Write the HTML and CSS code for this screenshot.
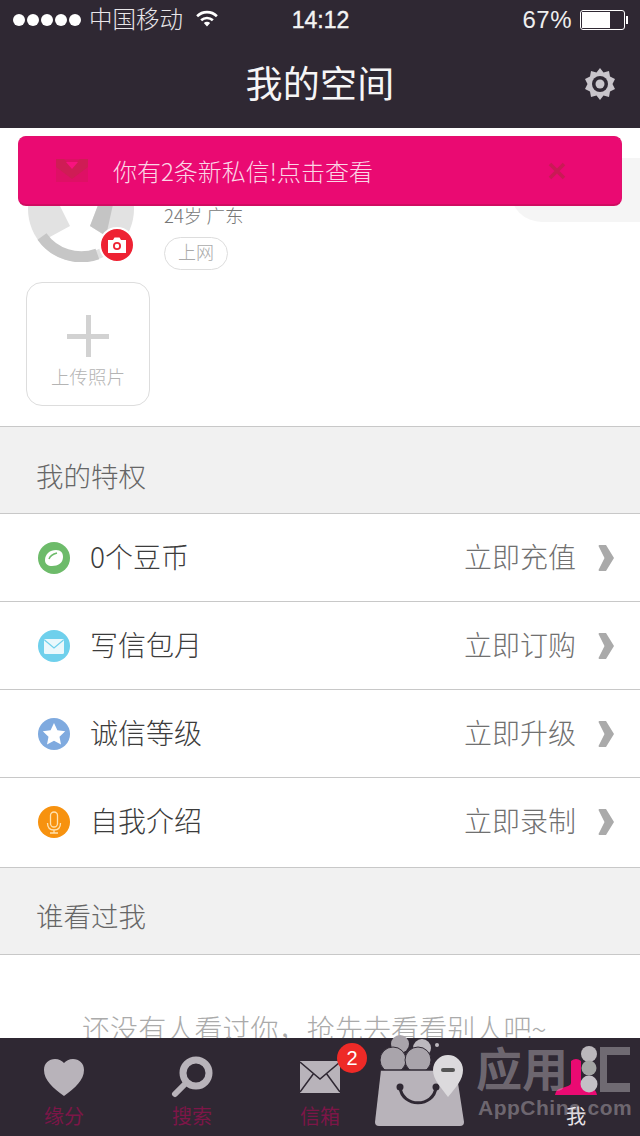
FILE: index.html
```html
<!DOCTYPE html>
<html lang="zh-CN">
<head>
  <meta charset="UTF-8">
  <meta name="viewport" content="width=device-width, initial-scale=1.0">
  <title>我的空间</title>
  <link rel="stylesheet" href="styles.css">
</head>
<body>
<div class="phone">

  <!-- Header -->
  <header class="top">
    <div class="status">
      <div class="status-left">
        <span class="dots"><i></i><i></i><i></i><i></i><i></i></span>
        <span class="carrier">中国移动</span>
        <svg class="wifi" width="24" height="18" viewBox="0 0 26 20"><path d="M1 7a17 17 0 0 1 24 0l-2 2.200a14 14 0 0 0-20 0zM5.500 11.500a11 11 0 0 1 15 0l-2 2.200a8 8 0 0 0-11 0zM9.500 15.500a5 5 0 0 1 7 0L13 19.500z" fill="#fff"/></svg>
      </div>
      <div class="clock">14:12</div>
      <div class="status-right">
        <span class="percent">67%</span>
        <span class="battery"><span class="battery-level"></span></span>
        <span class="battery-tip"></span>
      </div>
    </div>
    <div class="navbar">
      <h1>我的空间</h1>
      <svg class="gear" width="32" height="34" viewBox="0 0 32 34">
        <path d="M16 1l3.500 4.500 5.500-1.500 1 5.500 5 2.500-2.500 5 2.500 5-5 2.500-1 5.500-5.500-1.500L16 33l-3.500-4.500L7 30l-1-5.500L1 22l2.500-5L1 12l5-2.500L7 4l5.500 1.500z" fill="#c9c5cb"/>
        <circle cx="16" cy="17" r="8" fill="#2f2833"/>
        <circle cx="16" cy="17" r="4.500" fill="#c9c5cb"/>
      </svg>
    </div>
  </header>

  <main class="content">
    <!-- Profile -->
    <section class="profile">
      <div class="profile-top">
        <div class="avatar">
          <svg width="106" height="106" viewBox="0 0 106 106">
            <circle cx="53" cy="53" r="53" fill="#e2e2e2"/>
            <path d="M29 44L42 70 20 82A44 44 0 0 0 84 84L62 70 72 44z" fill="#fff"/>
            <path d="M72 44L62 70 78 80 86 44z" fill="#c4c4c4"/>
            <path d="M14 80.500A48 48 0 0 0 69.400 98" fill="none" stroke="#c6c6c6" stroke-width="11"/>
          </svg>
          <span class="camera">
            <svg width="20" height="18" viewBox="0 0 20 18">
              <path d="M1 4h5l1.500-2.500h5L14 4h5v13H1z" fill="#fff"/>
              <circle cx="10" cy="10" r="4" fill="#ee2233"/>
              <circle cx="10" cy="10" r="2.200" fill="#fff"/>
            </svg>
          </span>
        </div>
        <div class="info">
          <div class="age">24岁 广东</div>
          <div class="tag">上网</div>
        </div>
        <div class="bubble"><span>打招呼</span></div>
      </div>
      <div class="upload">
        <span class="plus"></span>
        <span class="upload-text">上传照片</span>
      </div>
    </section>

    <!-- Privileges -->
    <div class="section-title">我的特权</div>
    <div class="row">
      <svg class="row-icon" width="32" height="32" viewBox="0 0 32 32">
        <circle cx="16" cy="16" r="16" fill="#6dbb6a"/>
        <path d="M7 18c0-6 5-10 11-10 5 0 7 3 7 7 0 6-5 9-11 9-4 0-7-2-7-6z" fill="#fff"/>
        <path d="M11 17c1-3 4-5 8-6" fill="none" stroke="#6dbb6a" stroke-width="1.500"/>
      </svg>
      <span class="row-name">0个豆币</span>
      <span class="row-action">立即充值</span>
      <svg class="chevron" width="16" height="26" viewBox="0 0 16 26"><path d="M1 0h7l8 13-8 13H1q-1-1 0-2l5.500-11L1 2q-1-1 0-2z" fill="#aaa"/></svg>
    </div>
    <div class="row">
      <svg class="row-icon" width="32" height="32" viewBox="0 0 32 32">
        <circle cx="16" cy="16" r="16" fill="#6fd0ec"/>
        <rect x="6" y="9" width="20" height="15" rx="1.500" fill="#eaf8fc"/>
        <path d="M6.500 10l9.500 8 9.500-8" fill="none" stroke="#6fd0ec" stroke-width="1.200"/>
      </svg>
      <span class="row-name">写信包月</span>
      <span class="row-action">立即订购</span>
      <svg class="chevron" width="16" height="26" viewBox="0 0 16 26"><path d="M1 0h7l8 13-8 13H1q-1-1 0-2l5.500-11L1 2q-1-1 0-2z" fill="#aaa"/></svg>
    </div>
    <div class="row">
      <svg class="row-icon" width="32" height="32" viewBox="0 0 32 32">
        <circle cx="16" cy="16" r="16" fill="#7faadf"/>
        <path d="M16 5l3.400 7.300 7.800 1-5.700 5.400 1.500 7.900L16 22.700l-7 3.900 1.500-7.900-5.700-5.400 7.800-1z" fill="#fff"/>
      </svg>
      <span class="row-name">诚信等级</span>
      <span class="row-action">立即升级</span>
      <svg class="chevron" width="16" height="26" viewBox="0 0 16 26"><path d="M1 0h7l8 13-8 13H1q-1-1 0-2l5.500-11L1 2q-1-1 0-2z" fill="#aaa"/></svg>
    </div>
    <div class="row row-last">
      <svg class="row-icon" width="32" height="32" viewBox="0 0 32 32">
        <circle cx="16" cy="16" r="16" fill="#f7920f"/>
        <rect x="12.500" y="6" width="7" height="15" rx="3.500" fill="none" stroke="#ffe2b0" stroke-width="1.300"/>
        <path d="M9.500 17c0 5 3 7 6.500 7s6.500-2 6.500-7M16 24v3M12 27h8" fill="none" stroke="#ffe2b0" stroke-width="1.300"/>
      </svg>
      <span class="row-name">自我介绍</span>
      <span class="row-action">立即录制</span>
      <svg class="chevron" width="16" height="26" viewBox="0 0 16 26"><path d="M1 0h7l8 13-8 13H1q-1-1 0-2l5.500-11L1 2q-1-1 0-2z" fill="#aaa"/></svg>
    </div>

    <!-- Visitors -->
    <div class="section-title">谁看过我</div>
    <div class="empty">还没有人看过你&#xFF0C;抢先去看看别人吧~</div>
  </main>

  <!-- Tab bar -->
  <nav class="tabbar">
    <div class="tab">
      <svg width="42" height="38" viewBox="0 0 42 38"><path d="M21 38C10 30 1 22 1 12 1 5 6 1 12 1c4 0 7 2 9 4 2-2 5-4 9-4 6 0 11 4 11 11 0 10-9 18-20 26z" fill="#b8b3ba"/></svg>
      <span>缘分</span>
    </div>
    <div class="tab">
      <svg width="42" height="42" viewBox="0 0 42 42">
        <circle cx="25" cy="17" r="13" fill="none" stroke="#b8b3ba" stroke-width="7"/>
        <path d="M13 29L4 38" stroke="#b8b3ba" stroke-width="6" stroke-linecap="round"/>
      </svg>
      <span>搜索</span>
    </div>
    <div class="tab">
      <svg width="40" height="32" viewBox="0 0 40 32">
        <rect width="40" height="32" fill="#b8b3ba"/>
        <path d="M0 1l20 17L40 1M0 31l14-19M40 31L26 12" fill="none" stroke="#2f2833" stroke-width="1.500"/>
      </svg>
      <span>信箱</span>
      <b class="badge">2</b>
    </div>
    <div class="tab tab-covered">
      <svg width="42" height="38" viewBox="0 0 42 38"></svg>
      <span>附近</span>
    </div>
    <div class="tab tab-active">
      <svg width="44" height="38" viewBox="0 0 44 38"><path d="M17 3q5-4 10 0v22q0 2 3 3l9 3q3 1 4 6H1q1-5 4-6l9-3q3-1 3-3z" fill="#ea0a72"/></svg>
      <span>我</span>
    </div>
  </nav>

  <!-- Notice over the profile -->
  <div class="notice">
    <svg class="notice-mail" width="34" height="28" viewBox="0 0 34 28">
      <rect x="1" y="2" width="32" height="23" fill="#de1065"/>
      <path d="M1 2h8l8 8 8-8h8v8L17 22 1 10z" fill="#cf1c55"/>
      <path d="M11 5h12l-6 7z" fill="#f8127f"/>
    </svg>
    <span class="notice-text">你有2条新私信!点击查看</span>
    <svg class="notice-close" width="18" height="18" viewBox="0 0 18 18"><path d="M2 2l14 14M16 2L2 16" stroke="#c81a55" stroke-width="3.500"/></svg>
  </div>

  <!-- AppChina watermark -->
  <div class="watermark">
    <svg class="wm-bag" width="92" height="94" viewBox="0 0 92 94">
      <circle cx="26" cy="10" r="9" fill="#a9a4ab"/>
      <circle cx="48" cy="14" r="9" fill="#bcb8be"/>
      <circle cx="63" cy="11" r="2" fill="#bcb8be"/>
      <circle cx="19" cy="26" r="13" fill="#a9a4ab" stroke="#2f2833"/>
      <circle cx="44" cy="26" r="13" fill="#a9a4ab" stroke="#2f2833"/>
      <path d="M7 36h75l8 52q0 4-4 4H5q-4 0-4-4z" fill="#b8b3ba"/>
      <path d="M7 36h75" stroke="#2f2833" stroke-width="1.500"/>
      <path d="M26 53c2 21 34 21 36 0" fill="none" stroke="#2f2833" stroke-width="3"/>
      <circle cx="26" cy="53" r="3.500" fill="#2f2833"/>
      <circle cx="62" cy="53" r="3.500" fill="#2f2833"/>
    </svg>
    <svg class="wm-pin" width="30" height="42" viewBox="0 0 30 42"><path d="M15 42C8 32 0 25 0 15a15 15 0 0 1 30 0c0 10-7 17-15 27z" fill="#dcdadd"/><rect x="8" y="13" width="14" height="4" rx="2" fill="#555"/></svg>
    <span class="wm-title">应用</span>
    <svg class="wm-hui" width="60" height="60" viewBox="0 0 60 60">
      <path d="M22 11h30v8H29v28h23v9H22z" fill="#6f6a72"/>
      <circle cx="11" cy="18" r="8" fill="#bbb7bc"/>
      <circle cx="11" cy="32" r="7.500" fill="#a4a5a4"/>
      <circle cx="11" cy="48" r="8.500" fill="#c4c0c6"/>
    </svg>
    <span class="wm-sub">AppChina.com</span>
  </div>

</div>
</body>
</html>
```

FILE: styles.css
```css
* {
  box-sizing: border-box;
}

html, body {
  margin: 0;
  padding: 0;
}

body {
  font-family: "Noto Sans CJK SC", "Liberation Sans", sans-serif;
  background-color: #fff;
}

.phone {
  position: relative;
  width: 640px;
  height: 1136px;
  display: flex;
  flex-direction: column;
  overflow: hidden;
}

/* Header */
.top {
  background-color: #2f2833;
  color: #fff;
  height: 128px;
  flex-shrink: 0;
}

.status {
  height: 40px;
  padding: 0 12px 0 13px;
  display: grid;
  grid-template-columns: 1fr auto 1fr;
  align-items: center;
}

.status-left {
  display: flex;
  align-items: center;
}

.dots {
  display: flex;
  gap: 2px;
}

.dots i {
  width: 12px;
  height: 12px;
  border-radius: 50%;
  background-color: #fff;
}

.carrier {
  margin: 0 0 4px 8px;
  font-size: 23.500px;
  line-height: 32px;
  font-weight: 300;
  color: #e8e6e9;
}

.wifi {
  margin: 0 0 4px 12px;
}

.clock {
  font-family: "Liberation Sans", sans-serif;
  font-size: 23px;
  -webkit-text-stroke: 0.4px #f4f4f4;
  color: #f4f4f4;
}

.status-right {
  display: flex;
  align-items: center;
  justify-content: flex-end;
}

.percent {
  font-family: "Liberation Sans", sans-serif;
  font-size: 24px;
  letter-spacing: 0.5px;
  color: #eee;
  margin-right: 8px;
}

.battery {
  width: 45px;
  height: 20px;
  border: 1px solid #fff;
  border-radius: 3px;
  padding: 1px;
}

.battery-level {
  display: block;
  width: 28px;
  height: 100%;
  background-color: #fff;
}

.battery-tip {
  width: 2px;
  height: 8px;
  margin-left: 1px;
  background-color: #fff;
}

.navbar {
  height: 88px;
  display: flex;
  align-items: center;
  justify-content: center;
  position: relative;
}

.navbar h1 {
  margin: 0 0 4px 0;
  font-size: 37px;
  font-weight: 400;
  letter-spacing: 0.2px;
  color: #f6f5f6;
}

.gear {
  position: absolute;
  right: 24px;
  top: 27px;
}

/* Main */
.content {
  flex: 1;
  min-height: 0;
  overflow: hidden;
}

.profile {
  height: 299px;
  padding: 28px 0 0 26px;
  border-bottom: 1px solid #c8c8c8;
}

.profile-top {
  height: 126px;
  display: flex;
}

.avatar {
  position: relative;
  width: 106px;
  height: 106px;
  margin-left: 2px;
  flex-shrink: 0;
}

.camera {
  position: absolute;
  right: -1px;
  bottom: -1px;
  width: 36px;
  height: 36px;
  border-radius: 50%;
  background-color: #ee2233;
  border: 2px solid #fff;
  display: flex;
  align-items: center;
  justify-content: center;
}

.info {
  margin-left: 30px;
  padding-top: 46px;
}

.age {
  font-size: 18.500px;
  font-weight: 300;
  line-height: 26px;
  color: #777;
}

.tag {
  margin-top: 9px;
  width: 64px;
  height: 33px;
  border: 1px solid #ddd;
  border-radius: 17px;
  font-size: 18px;
  font-weight: 300;
  line-height: 27px;
  text-align: center;
  color: #aaa;
}

.bubble {
  position: absolute;
  right: 0;
  top: 158px;
  width: 130px;
  height: 64px;
  background-color: #f5f5f5;
  border-radius: 32px 0 0 32px;
  text-align: center;
  font-size: 18px;
  line-height: 76px;
  color: #888;
}

.upload {
  width: 124px;
  height: 124px;
  border: 1px solid #ddd;
  border-radius: 16px;
  display: flex;
  flex-direction: column;
  align-items: center;
  padding-top: 32px;
}

.plus {
  position: relative;
  flex-shrink: 0;
  width: 42px;
  height: 42px;
  background:
    linear-gradient(#d2d2d2, #d2d2d2) center / 42px 5px no-repeat,
    linear-gradient(#d2d2d2, #d2d2d2) center / 5px 42px no-repeat;
}

.upload-text {
  margin-top: 5px;
  font-size: 18.500px;
  font-weight: 300;
  line-height: 28px;
  white-space: nowrap;
  color: #b4b4b4;
}

.section-title {
  height: 87px;
  padding: 0 0 0 36px;
  background-color: #f1f1f1;
  border-bottom: 1px solid #c8c8c8;
  font-size: 27.500px;
  line-height: 97px;
  font-weight: 300;
  color: #666;
  overflow: hidden;
}

.row-last + .section-title {
  line-height: 95px;
}

.row {
  height: 88px;
  padding: 0 26px 0 38px;
  display: flex;
  align-items: center;
  border-bottom: 1px solid #c8c8c8;
  background-color: #fff;
}

.row-last {
  height: 90px;
  padding-bottom: 1px;
}

.row-name {
  margin: 0 0 4px 20px;
  font-size: 28px;
  font-weight: 300;
  color: #3c3c3c;
  flex: 1;
}

.row-action {
  margin-bottom: 4px;
  font-size: 28px;
  font-weight: 300;
  color: #707070;
}

.chevron {
  margin-left: 22px;
}

.empty {
  padding: 53px 0 0 82px;
  font-size: 28px;
  font-weight: 300;
  line-height: 40px;
  letter-spacing: 0.1px;
  white-space: nowrap;
  color: #aaa;
}

/* Tab bar */
.tabbar {
  height: 98px;
  flex-shrink: 0;
  background-color: #2f2833;
  display: flex;
}

.tab {
  position: relative;
  flex: 1;
  display: flex;
  flex-direction: column;
  align-items: center;
  padding-top: 18px;
  font-size: 20px;
  color: #7c1648;
}

.tab svg {
  height: 42px;
}

.tab span {
  margin-top: 4px;
  line-height: 28px;
}

.tab-active {
  color: #e8e4e8;
}

.tab-covered span {
  margin-right: 6px;
  font-size: 18px;
}

.badge {
  position: absolute;
  left: 81px;
  top: 5px;
  width: 30px;
  height: 30px;
  border-radius: 50%;
  background-color: #ee2a27;
  color: #fff;
  font-family: "Liberation Sans", sans-serif;
  font-size: 20px;
  font-weight: 400;
  line-height: 30px;
  text-align: center;
}

/* Notice */
.notice {
  position: absolute;
  left: 18px;
  top: 136px;
  width: 604px;
  height: 70px;
  padding: 0 55px 0 36px;
  background-color: #ea0a72;
  border: 1px solid #e2106c;
  border-bottom: 2px solid #d00c62;
  border-radius: 8px;
  display: flex;
  align-items: center;
}

.notice-text {
  margin-left: 24px;
  flex: 1;
  font-size: 24px;
  font-weight: 300;
  color: #fbd6e6;
}

/* Watermark */
.watermark {
  position: absolute;
  left: 374px;
  top: 1034px;
  width: 266px;
  height: 102px;
}

.wm-bag {
  position: absolute;
  left: 0;
  top: 0;
}

.wm-pin {
  position: absolute;
  left: 59px;
  top: 21px;
}

.wm-title {
  position: absolute;
  left: 102px;
  top: 1px;
  font-size: 46px;
  font-weight: 700;
  line-height: 62px;
  color: rgba(200, 195, 200, 0.42);
}

.wm-hui {
  position: absolute;
  left: 204px;
  top: 2px;
}

.wm-sub {
  position: absolute;
  left: 104px;
  top: 62px;
  font-family: "Liberation Sans", sans-serif;
  font-size: 21px;
  font-weight: 700;
  line-height: 24px;
  letter-spacing: 0.5px;
  color: rgba(200, 195, 200, 0.42);
}
```
